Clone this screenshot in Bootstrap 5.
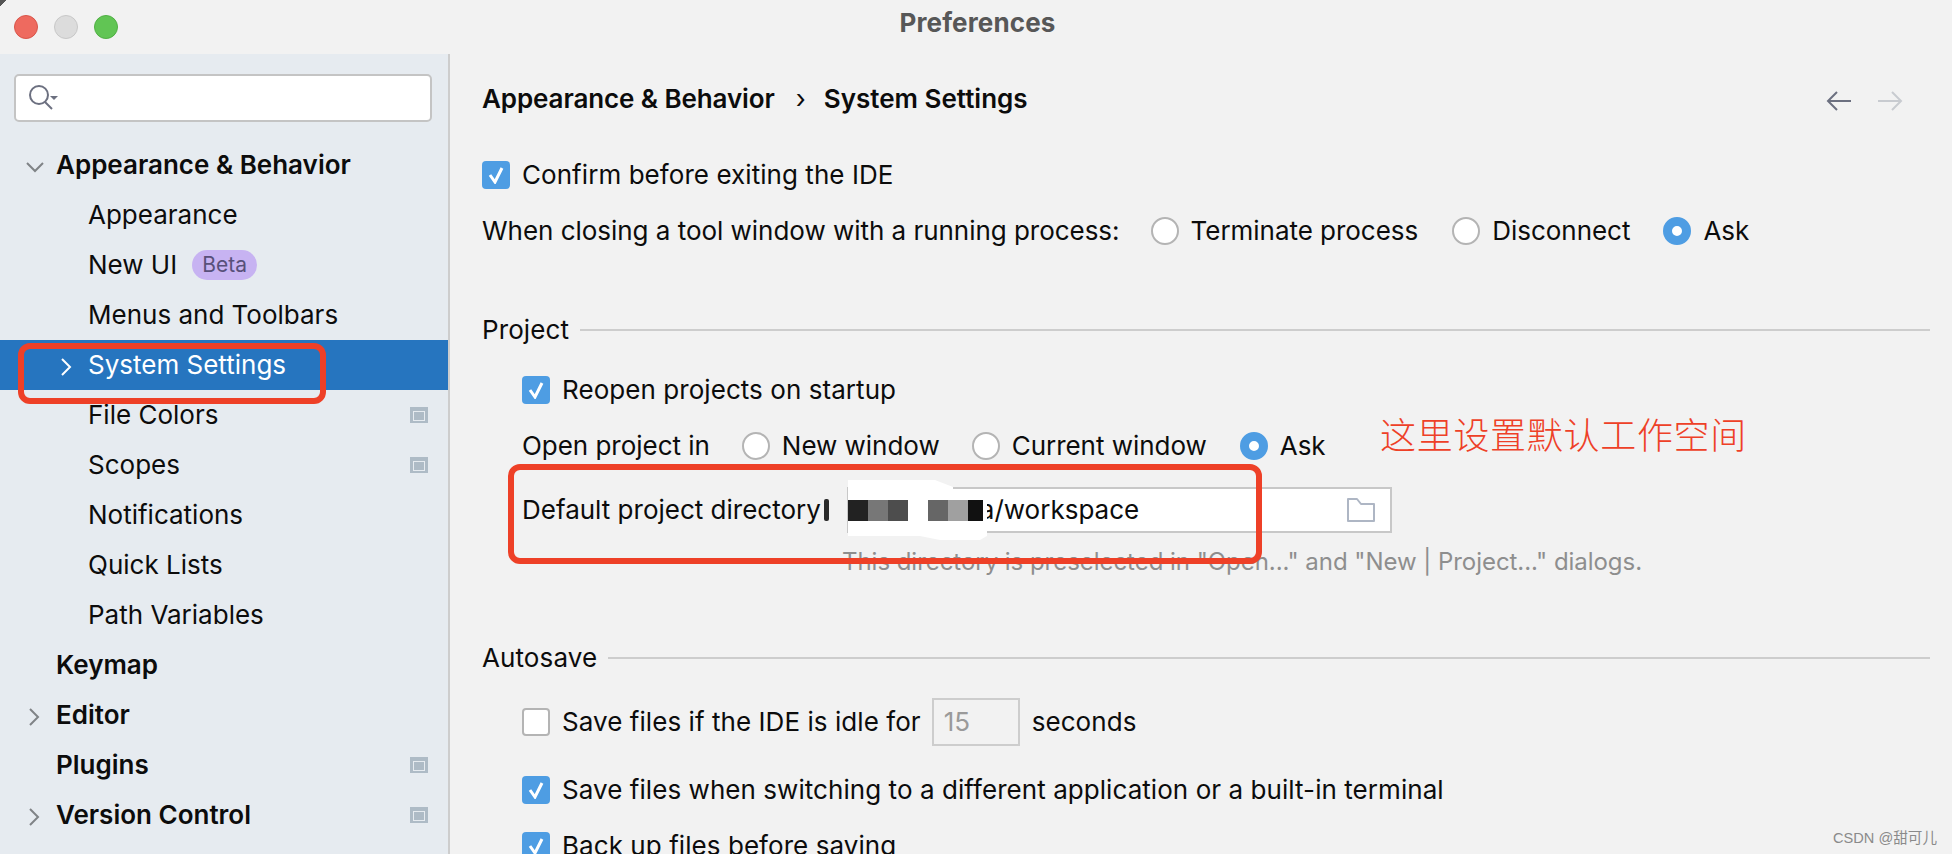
<!DOCTYPE html>
<html lang="en">
<head>
<meta charset="utf-8">
<title>Preferences</title>
<link rel="stylesheet" href="https://cdn.jsdelivr.net/npm/bootstrap@5.3.0/dist/css/bootstrap.min.css">
<style>
html,body{height:854px;overflow:hidden}
body{background:#f2f2f2;font-family:Inter,"Liberation Sans","Noto Sans CJK SC",sans-serif;font-size:26px;color:#0c0c0c;line-height:1.2}
.shell{position:relative;width:1952px;height:854px;overflow:hidden}
.corner{position:absolute;left:0;top:0;width:7px;height:7px;background:linear-gradient(135deg,#555 45%,transparent 50%)}
.titlebar{height:54px;background:#f2f2f2;padding-left:14px}
.light{width:24px;height:24px;border-radius:50%;border:1px solid}
.l-red{background:#ee6a5f;border-color:#d9554a}
.l-gray{background:#dcdcdc;border-color:#c8c8c8}
.l-green{background:#61c554;border-color:#50b044}
.wintitle{position:absolute;left:3px;right:0;top:7px;text-align:center;font-weight:700;font-size:26px;letter-spacing:.15px;color:#575757}
.side{width:450px;height:800px;flex:none;background:#e6ebf0;border-right:2px solid #cdcdcd;padding-top:20px}
.searchbox{margin:0 16px 0 14px;height:48px;background:#fff;border:2px solid #c4c4c4;border-radius:5px;padding-left:12px}
.tree{margin-top:18px}
.node{height:50px;padding-right:20px}
.twist{width:56px;flex:none;padding-left:25px}
.twist-side{padding-left:28px}
.twist-sub{width:88px;padding-left:60px}
.node-bold{font-weight:600}
.node-on{background:#2675bf;color:#fff}
.beta{background:#c7b3f2;color:#58507a;font-size:21px;border-radius:15px;height:30px;padding:0 10px;margin-left:15px;line-height:30px}
.gear{width:18px;height:16px;border:solid #aebbc6;border-width:4px 3px 2px;background:#e6ebf0;margin-left:auto;position:relative}
.gear::after{content:"";position:absolute;left:1px;right:1px;top:1px;bottom:1px;background:#aebbc6}
.pane{flex:1;padding:0 22px 0 32px;min-width:0}
.crumbs{height:93px;padding-top:29px;font-weight:600}
.crumb-first{letter-spacing:-.1px}
.sep{margin:0 18px 0 21px}
.navarrows{margin-right:27px;margin-top:7px;gap:25px}
.rowline{height:56px;letter-spacing:-.03px}
.rowline-check{letter-spacing:.06px}
.tick{width:28px;height:28px;border-radius:4px;margin-right:12px;flex:none}
.tick-on{background:#4e9de3}
.tick-off{background:#fff;border:2px solid #b4b4b4}
.dot{width:28px;height:28px;flex:none;border-radius:50%;margin-right:12px;background:#fff;border:2px solid #b4b4b4}
.dot-on{background:#fff;border:9px solid #4e9de3}
.grouphead{height:28px;letter-spacing:.1px}
.groupline{height:2px;background:#cdcdcd;flex:1;margin-left:11px}
.inset{padding-left:40px}
.dirrow{height:72px}
.pathfield{position:relative;width:545px;height:46px;margin-left:26px;background:#fff;border:2px solid #c8c8c8;padding:0 14px 0 131px}
.hint{color:#8e8e8e;font-size:24px;margin-top:2px;padding-left:320px;height:34px;letter-spacing:-.04px}
.numfield{width:88px;height:48px;border:2px solid #cdcdcd;color:#9a9a9a;padding-left:10px;margin:0 12px 0 11px}
.redbox{position:absolute;border:6px solid #ee4027;pointer-events:none}
.note{position:absolute;left:1380px;top:412px;color:#ee4027;font-family:"Noto Sans CJK SC",sans-serif;font-size:36px;font-weight:300;letter-spacing:.7px;line-height:1.2;white-space:nowrap}
.smear{position:absolute;left:820px;top:480px}
.mark-wm{position:absolute;right:15px;top:829px;font-size:14.6px;line-height:18px;color:#8a8a8a;font-family:"Liberation Sans","Noto Sans CJK SC",sans-serif}
</style>
</head>
<body>
<div class="shell">
  <div class="titlebar d-flex align-items-center gap-3">
    <span class="light l-red"></span><span class="light l-gray"></span><span class="light l-green"></span>
  </div>
  <div class="corner"></div>
  <div class="wintitle">Preferences</div>
  <div class="d-flex">
    <aside class="side">
      <div class="searchbox d-flex align-items-center">
        <svg width="34" height="26" viewBox="0 0 34 26" fill="none"><circle cx="11" cy="10" r="9" stroke="#6c7080" stroke-width="2"/><path d="M17 17l7 7" stroke="#6c7080" stroke-width="2"/><path d="M22 11h8l-4 4z" fill="#6c7080"/></svg>
      </div>
      <div class="tree">
        <div class="node node-bold d-flex align-items-center"><span class="twist"><svg width="20" height="12" viewBox="0 0 20 12" fill="none"><path d="M2 2l8 8 8-8" stroke="#7f8386" stroke-width="2"/></svg></span>Appearance &amp; Behavior</div>
        <div class="node d-flex align-items-center"><span class="twist twist-sub"></span>Appearance</div>
        <div class="node d-flex align-items-center"><span class="twist twist-sub"></span>New UI<span class="beta">Beta</span></div>
        <div class="node d-flex align-items-center"><span class="twist twist-sub"></span>Menus and Toolbars</div>
        <div class="node node-on d-flex align-items-center"><span class="twist twist-sub"><svg width="12" height="20" viewBox="0 0 12 20" fill="none"><path d="M2 2l8 8-8 8" stroke="#fff" stroke-width="2"/></svg></span>System Settings</div>
        <div class="node d-flex align-items-center"><span class="twist twist-sub"></span>File Colors<span class="gear"></span></div>
        <div class="node d-flex align-items-center"><span class="twist twist-sub"></span>Scopes<span class="gear"></span></div>
        <div class="node d-flex align-items-center"><span class="twist twist-sub"></span>Notifications</div>
        <div class="node d-flex align-items-center"><span class="twist twist-sub"></span>Quick Lists</div>
        <div class="node d-flex align-items-center"><span class="twist twist-sub"></span>Path Variables</div>
        <div class="node node-bold d-flex align-items-center"><span class="twist"></span>Keymap</div>
        <div class="node node-bold d-flex align-items-center"><span class="twist twist-side"><svg width="12" height="20" viewBox="0 0 12 20" fill="none"><path d="M2 2l8 8-8 8" stroke="#7f8386" stroke-width="2"/></svg></span>Editor</div>
        <div class="node node-bold d-flex align-items-center"><span class="twist"></span>Plugins<span class="gear"></span></div>
        <div class="node node-bold d-flex align-items-center"><span class="twist twist-side"><svg width="12" height="20" viewBox="0 0 12 20" fill="none"><path d="M2 2l8 8-8 8" stroke="#7f8386" stroke-width="2"/></svg></span>Version Control<span class="gear"></span></div>
      </div>
    </aside>
    <main class="pane">
      <div class="crumbs d-flex align-items-start">
        <span class="crumb-first">Appearance &amp; Behavior</span><span class="sep fw-normal">›</span><span>System Settings</span>
        <span class="ms-auto d-flex navarrows">
          <svg width="26" height="22" viewBox="0 0 26 22" fill="none"><path d="M25 11H2M11 2l-9 9 9 9" stroke="#6c7080" stroke-width="2"/></svg>
          <svg width="26" height="22" viewBox="0 0 26 22" fill="none"><path d="M1 11h23M15 2l9 9-9 9" stroke="#c8cbd0" stroke-width="2"/></svg>
        </span>
      </div>
      <div class="rowline rowline-check d-flex align-items-center">
        <span class="tick tick-on d-flex align-items-center justify-content-center"><svg width="16" height="18" viewBox="0 0 16 18" fill="none"><path d="M2 9l5 7 7-14" stroke="#fff" stroke-width="3"/></svg></span>Confirm before exiting the IDE
      </div>
      <div class="rowline d-flex align-items-center">
        <span style="margin-right:31px">When closing a tool window with a running process:</span>
        <span class="dot"></span><span style="margin-right:34px">Terminate process</span>
        <span class="dot"></span><span style="margin-right:33px">Disconnect</span>
        <span class="dot dot-on"></span><span>Ask</span>
      </div>
      <div class="grouphead d-flex align-items-center" style="margin-top:57px">Project<span class="groupline"></span></div>
      <div class="inset">
        <div class="rowline rowline-check d-flex align-items-center" style="margin-top:18px">
          <span class="tick tick-on d-flex align-items-center justify-content-center"><svg width="16" height="18" viewBox="0 0 16 18" fill="none"><path d="M2 9l5 7 7-14" stroke="#fff" stroke-width="3"/></svg></span>Reopen projects on startup
        </div>
        <div class="rowline d-flex align-items-center">
          <span style="margin-right:32px">Open project in</span>
          <span class="dot"></span><span style="margin-right:32px">New window</span>
          <span class="dot"></span><span style="margin-right:33px">Current window</span>
          <span class="dot dot-on"></span><span>Ask</span>
        </div>
        <div class="dirrow d-flex align-items-center">
          <span>Default project directory</span>
          <div class="pathfield d-flex align-items-center">a/workspace<svg class="ms-auto" width="30" height="26" viewBox="0 0 30 26" fill="none"><path d="M2 24V2h9l4 5h13v17z" stroke="#aeb6c4" stroke-width="2" stroke-linejoin="round"/></svg></div>
        </div>
        <div class="hint">This directory is preselected in "Open..." and "New | Project..." dialogs.</div>
      </div>
      <div class="grouphead d-flex align-items-center" style="margin-top:62px">Autosave<span class="groupline"></span></div>
      <div class="inset">
        <div class="rowline rowline-check d-flex align-items-center" style="margin-top:22px;">
          <span class="tick tick-off"></span>Save files if the IDE is idle for
          <span class="numfield d-flex align-items-center">15</span>seconds
        </div>
        <div class="rowline rowline-check d-flex align-items-center" style="margin-top:12px">
          <span class="tick tick-on d-flex align-items-center justify-content-center"><svg width="16" height="18" viewBox="0 0 16 18" fill="none"><path d="M2 9l5 7 7-14" stroke="#fff" stroke-width="3"/></svg></span>Save files when switching to a different application or a built-in terminal
        </div>
        <div class="rowline rowline-check d-flex align-items-center">
          <span class="tick tick-on d-flex align-items-center justify-content-center"><svg width="16" height="18" viewBox="0 0 16 18" fill="none"><path d="M2 9l5 7 7-14" stroke="#fff" stroke-width="3"/></svg></span>Back up files before saving
        </div>
      </div>
    </main>
  </div>
  <svg class="smear" width="172" height="62" viewBox="0 0 172 62"><rect x="4" y="19" width="5" height="22" rx="2" fill="#2a2a2a"/><g transform="translate(28 0)"><path d="M0 0H87L105 7V9H139V56L132 60H92L72 56H0Z" fill="#fff"/><rect y="20" width="20" height="21" fill="#222"/><rect x="20" y="20" width="20" height="21" fill="#777"/><rect x="40" y="20" width="20" height="21" fill="#4d4d4d"/><rect x="80" y="20" width="20" height="21" fill="#666"/><rect x="100" y="20" width="20" height="21" fill="#a0a0a0"/><rect x="120" y="20" width="15" height="21" fill="#111"/></g></svg>
  <div class="redbox" style="left:18px;top:343px;width:308px;height:61px;border-radius:12px"></div>
  <div class="redbox" style="left:508px;top:464px;width:754px;height:100px;border-radius:12px"></div>
  <div class="note">这里设置默认工作空间</div>
  <div class="mark-wm">CSDN @甜可儿</div>
</div>
<script src="https://cdn.jsdelivr.net/npm/bootstrap@5.3.0/dist/js/bootstrap.bundle.min.js"></script>
</body>
</html>
